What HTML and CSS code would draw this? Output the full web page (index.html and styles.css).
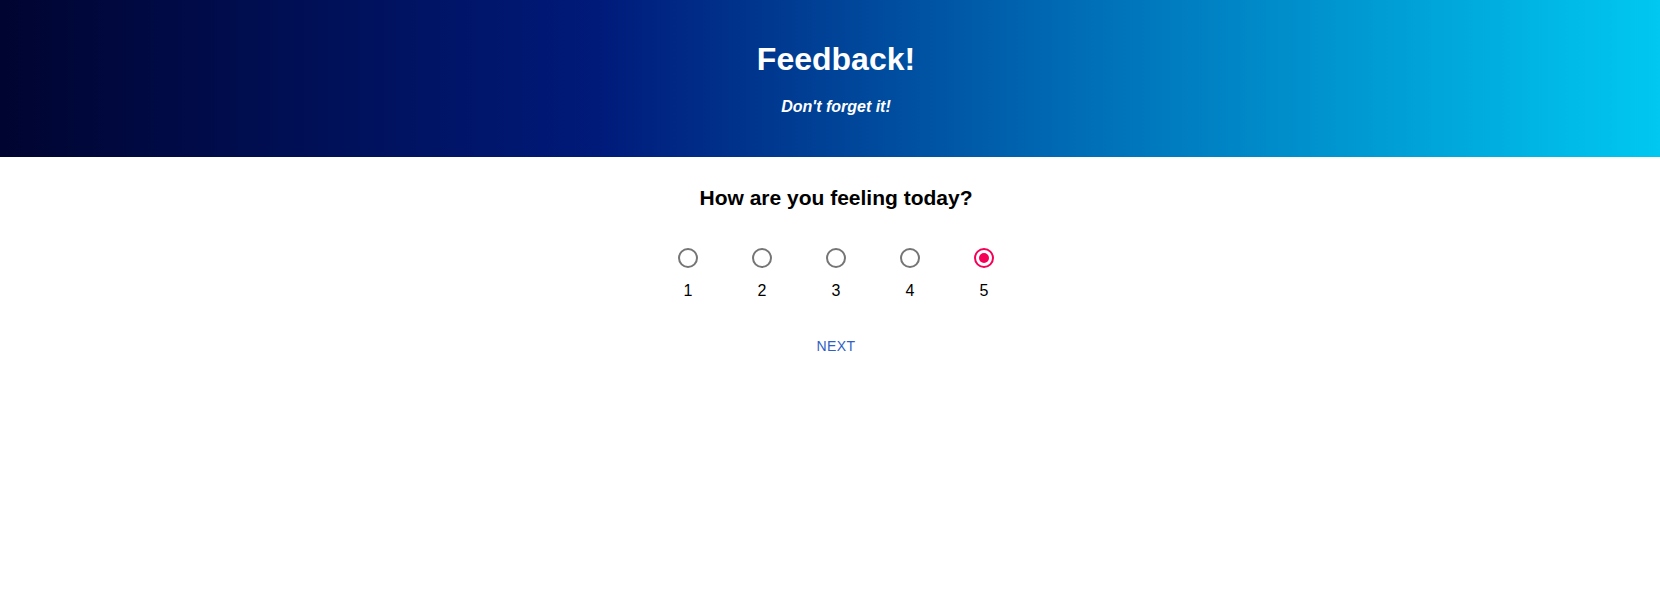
FILE: index.html
```html
<!DOCTYPE html>
<html lang="en">
<head>
<meta charset="utf-8">
<title>Feedback</title>
<link rel="stylesheet" href="styles.css">
</head>
<body>
  <header class="hero">
    <h1 class="hero-title">Feedback!</h1>
    <p class="hero-sub">Don't forget it!</p>
  </header>
  <main class="survey">
    <h2 class="question">How are you feeling today?</h2>
    <div class="options">
      <label class="option"><span class="radio"></span><span class="num">1</span></label>
      <label class="option"><span class="radio"></span><span class="num">2</span></label>
      <label class="option"><span class="radio"></span><span class="num">3</span></label>
      <label class="option"><span class="radio"></span><span class="num">4</span></label>
      <label class="option"><span class="radio checked"></span><span class="num">5</span></label>
    </div>
    <button class="next">Next</button>
  </main>
</body>
</html>
```
FILE: styles.css
```css
* { box-sizing: border-box; }
body {
  margin: 0;
  font-family: "Liberation Sans", Arial, sans-serif;
  background: #fff;
  color: #000;
}
.hero {
  height: 157px;
  background: linear-gradient(90deg, #000430 0%, #001a7a 36%, #0070b8 66%, #00c8f0 100%);
  color: #fff;
  text-align: center;
  padding: 41px 0 0 12px;
}
.hero-title {
  margin: 0;
  font-size: 32px;
  font-weight: bold;
  line-height: 37px;
}
.hero-sub {
  margin: 20px 0 0;
  font-size: 16px;
  font-weight: bold;
  font-style: italic;
  line-height: 18px;
}
.survey {
  display: flex;
  flex-direction: column;
  align-items: center;
  padding-left: 12px;
}
.question {
  margin: 29px 0 0;
  font-size: 21px;
  font-weight: bold;
  line-height: 24px;
}
.options {
  display: flex;
  margin-top: 38px;
}
.option {
  width: 74px;
  display: flex;
  flex-direction: column;
  align-items: center;
}
.radio {
  width: 20px;
  height: 20px;
  border: 2px solid #757575;
  border-radius: 50%;
  display: flex;
  align-items: center;
  justify-content: center;
}
.radio.checked {
  border-color: #f50057;
}
.radio.checked::after {
  content: "";
  width: 10px;
  height: 10px;
  border-radius: 50%;
  background: #f50057;
}
.num {
  margin-top: 14px;
  font-size: 16px;
  line-height: 18px;
}
.next {
  margin-top: 32px;
  background: none;
  border: none;
  font-family: "Liberation Sans", Arial, sans-serif;
  font-size: 14px;
  text-transform: uppercase;
  letter-spacing: 0.4px;
  color: #2f5fc4;
  padding: 6px 8px;
  cursor: pointer;
}
```
